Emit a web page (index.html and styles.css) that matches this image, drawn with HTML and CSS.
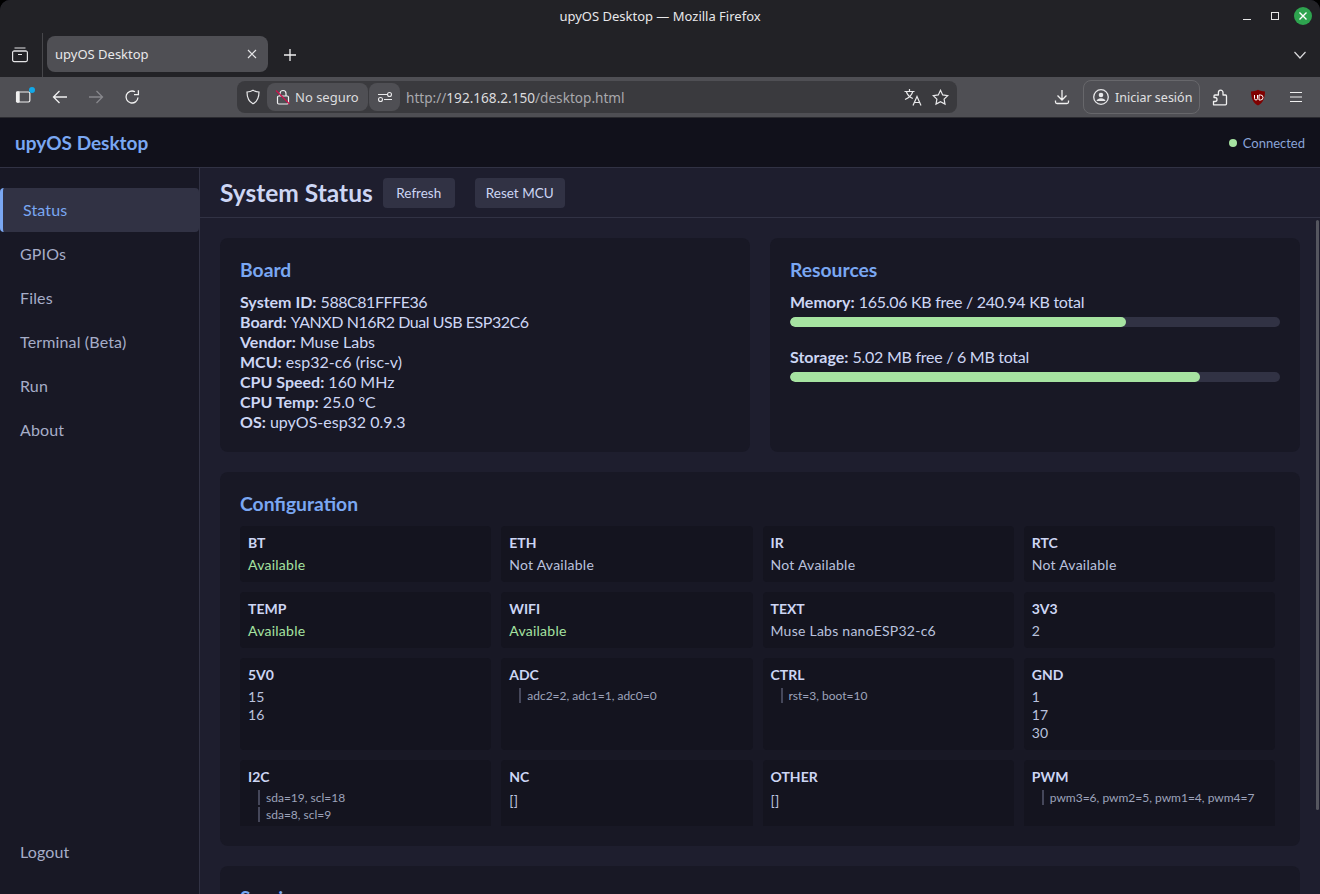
FILE: index.html
```html
<!DOCTYPE html>
<html lang="en">
<head>
    <meta charset="UTF-8">
    <meta name="viewport" content="width=device-width, initial-scale=1.0">
    <title>upyOS Desktop</title>
    <link rel="stylesheet" href="styles.css">
</head>
<body>
<div class="window">
    <div class="titlebar">
        <span class="window-title">upyOS Desktop — Mozilla Firefox</span>
        <div class="window-buttons">
            <svg class="win-min" width="10" height="10" viewBox="0 0 10 10"><path d="M1 8.5h8" stroke="#e6e6e6" fill="none"/></svg>
            <svg class="win-max" width="10" height="10" viewBox="0 0 10 10"><rect x="1.5" y="1.5" width="7" height="7" stroke="#e6e6e6" fill="none"/></svg>
            <svg class="win-close" width="18" height="18" viewBox="0 0 18 18"><circle cx="9" cy="9" r="9" fill="#2ea44f"/><path d="M5.5 5.5l7 7M12.5 5.5l-7 7" stroke="#fff" stroke-width="1.4"/></svg>
        </div>
    </div>
    <div class="tabbar">
        <svg class="view-icon" width="18" height="18" viewBox="0 0 18 18" fill="none" stroke="#e4e4e6" stroke-width="1.2"><path d="M3.500 2h11M2.500 5h13"/><rect x="1.600" y="5" width="14.800" height="10.600" rx="1.500"/><path d="M7 8.500h4"/></svg>
        <div class="tab-sep"></div>
        <div class="tab">
            <span>upyOS Desktop</span>
            <svg width="10" height="10" viewBox="0 0 10 10"><path d="M1 1l8 8M9 1l-8 8" stroke="#e4e4e6" stroke-width="1.2"/></svg>
        </div>
        <svg class="new-tab" width="14" height="14" viewBox="0 0 14 14"><path d="M7 1v12M1 7h12" stroke="#f0f0f0" stroke-width="1.3"/></svg>
        <svg class="tabs-menu" width="14" height="14" viewBox="0 0 14 14" fill="none"><path d="M1.500 4l5.500 6 5.500-6" stroke="#d8d8da" stroke-width="1.2"/></svg>
    </div>
    <div class="toolbar">
        <div class="tool-left">
            <span class="sidebar-btn">
                <svg width="18" height="16" viewBox="0 0 18 16"><rect x="1.700" y="2.700" width="14" height="10.600" rx="1.500" fill="none" stroke="#f0f0f0" stroke-width="1.3"/><rect x="1" y="2" width="4" height="12" rx="1.500" fill="#f0f0f0"/></svg>
                <i class="sidebar-dot"></i>
            </span>
            <svg width="16" height="16" viewBox="0 0 16 16" fill="none" stroke="#f0f0f0" stroke-width="1.3"><path d="M15 8H1.500M7.500 2L1.500 8l6 6"/></svg>
            <svg width="16" height="16" viewBox="0 0 16 16" fill="none" stroke="#88888c" stroke-width="1.3"><path d="M1 8h13.500M8.500 2l6 6-6 6"/></svg>
            <svg width="16" height="16" viewBox="0 0 16 16" fill="none" stroke="#f0f0f0" stroke-width="1.3"><path d="M14 8.500A6 6 0 1 1 11 2.800"/><path d="M14.400 1.200v4.400H10"/></svg>
        </div>
        <div class="urlbar">
            <svg class="shield" width="16" height="16" viewBox="0 0 16 16" fill="none" stroke="#e8e8ea" stroke-width="1.2"><path d="M8 1.200c2 1.300 4 1.700 6 1.800 0 5.500-1.500 9.500-6 11.800C3.500 12.500 2 8.500 2 3c2-.1 4-.5 6-1.800z"/></svg>
            <div class="chip chip-lock">
                <svg width="16" height="16" viewBox="0 0 16 16" fill="none"><rect x="2.500" y="7" width="11" height="8" rx="1.200" stroke="#f0f0f2" stroke-width="1.200"/><path d="M5 7V4.500a3 3 0 0 1 6 0V7" stroke="#f0f0f2" stroke-width="1.200"/><path d="M1 1.500l13.500 13.500" stroke="#d0104c" stroke-width="1.200"/></svg>
                <span>No seguro</span>
            </div>
            <div class="chip chip-perm">
                <svg width="16" height="16" viewBox="0 0 16 16" fill="none" stroke="#e8e8ea" stroke-width="1.100"><path d="M1 5.500h9M7 10.500h8"/><circle cx="12.500" cy="5.500" r="2"/><circle cx="3.500" cy="10.500" r="2"/></svg>
            </div>
            <span class="url"><span class="url-dim">http://</span>192.168.2.150<span class="url-dim">/desktop.html</span></span>
            <svg class="translate" width="18" height="18" viewBox="0 0 18 18" fill="none" stroke="#e8e8ea" stroke-width="1.200"><path d="M.5 3.500h10M5.500 1v2.500M8.800 3.500C7.800 7 5 9.800 1 11.500M2.300 3.500c1 3.500 3.500 5.700 6.500 7"/><path d="M9 17.500l4-9 4 9M10.400 14.500h5.200"/></svg>
            <svg class="star" width="17" height="17" viewBox="0 0 17 17" fill="none" stroke="#e8e8ea" stroke-width="1.200"><path d="M8.500 1.300l2.200 4.600 5 .7-3.600 3.500.9 5-4.500-2.400L4 15.100l.9-5L1.300 6.600l5-.7z"/></svg>
        </div>
        <div class="tool-right">
            <svg width="16" height="16" viewBox="0 0 16 16" fill="none" stroke="#f0f0f0" stroke-width="1.300"><path d="M8 1v9.500M3.500 6.500L8 11l4.500-4.500M1.500 11.500v1.500a1.500 1.500 0 0 0 1.500 1.500h10a1.500 1.500 0 0 0 1.500-1.500v-1.500"/></svg>
            <div class="signin">
                <svg width="18" height="18" viewBox="0 0 18 18" fill="none"><circle cx="9" cy="9" r="7.300" stroke="#e8e8ea" stroke-width="1.300"/><circle cx="9" cy="7" r="2.300" fill="#e8e8ea"/><path d="M4.500 13c.6-2 2.200-2.800 4.500-2.800s3.900.8 4.500 2.800z" fill="#e8e8ea"/></svg>
                <span>Iniciar sesión</span>
            </div>
            <svg class="puzzle" width="16" height="17" viewBox="0 0 16 17" fill="none" stroke="#f0f0f0" stroke-width="1.300" stroke-linejoin="round"><path d="M1.500 15.800h12a1 1 0 0 0 1-1V7a1 1 0 0 0-1-1h-2.500V3.500a2.300 2.300 0 0 0-4.600 0V6H3a1 1 0 0 0-1 1v1.500h1a2 2 0 0 1 0 4H1.500z"/></svg>
            <svg class="ublock" width="16" height="17" viewBox="0 0 16 17"><path d="M8 .8c2 1.200 4.500 1.600 7 1.700 0 6.500-2 11.500-7 14-5-2.500-7-7.500-7-14 2.500-.1 5-.5 7-1.700z" fill="#800000"/><path d="M4.500 6v3.500a1.500 1.500 0 0 0 3 0V6M9 6v5h1.500a2.500 2.500 0 0 0 0-5z" fill="none" stroke="#fff" stroke-width="1"/></svg>
            <svg class="hamburger" width="14" height="12" viewBox="0 0 14 12"><path d="M1 1.500h12M1 6h12M1 10.500h12" stroke="#f0f0f0" stroke-width="1.200"/></svg>
        </div>
    </div>

    <header class="app-header">
        <span class="brand">upyOS Desktop</span>
        <span class="status"><i class="status-dot"></i>Connected</span>
    </header>

    <div class="app-body">
        <nav class="sidebar">
            <a class="nav-item active">Status</a>
            <a class="nav-item">GPIOs</a>
            <a class="nav-item">Files</a>
            <a class="nav-item">Terminal (Beta)</a>
            <a class="nav-item">Run</a>
            <a class="nav-item">About</a>
            <a class="nav-item logout">Logout</a>
        </nav>
        <main class="main">
            <div class="main-head">
                <h1>System Status</h1>
                <button class="btn">Refresh</button>
                <button class="btn btn-reset">Reset MCU</button>
            </div>
            <div class="content">
                <div class="scroll-thumb"></div>
                <div class="top-cards">
                    <section class="card">
                        <h2>Board</h2>
                        <p class="line"><b>System ID:</b> <span class="tight">588C81FFFE36</span></p>
                        <p class="line"><b>Board:</b> <span class="tight">YANXD N16R2 Dual USB ESP32C6</span></p>
                        <p class="line"><b>Vendor:</b> Muse Labs</p>
                        <p class="line"><b>MCU:</b> esp32-c6 (risc-v)</p>
                        <p class="line"><b>CPU Speed:</b> 160 MHz</p>
                        <p class="line"><b>CPU Temp:</b> 25.0 °C</p>
                        <p class="line"><b>OS:</b> upyOS-esp32 0.9.3</p>
                    </section>
                    <section class="card">
                        <h2>Resources</h2>
                        <p class="line"><b>Memory:</b> <span class="tight-res">165.06 KB free / 240.94 KB total</span></p>
                        <div class="bar"><div class="bar-fill" style="width: 68.5%"></div></div>
                        <p class="line"><b>Storage:</b> <span class="tight-res">5.02 MB free / 6 MB total</span></p>
                        <div class="bar"><div class="bar-fill" style="width: 83.7%"></div></div>
                    </section>
                </div>
                <section class="card">
                    <h2>Configuration</h2>
                    <div class="config-grid">
                        <div class="item"><div class="label">BT</div><div class="val ok">Available</div></div>
                        <div class="item"><div class="label">ETH</div><div class="val">Not Available</div></div>
                        <div class="item"><div class="label">IR</div><div class="val">Not Available</div></div>
                        <div class="item"><div class="label">RTC</div><div class="val">Not Available</div></div>
                        <div class="item"><div class="label">TEMP</div><div class="val ok">Available</div></div>
                        <div class="item"><div class="label">WIFI</div><div class="val ok">Available</div></div>
                        <div class="item"><div class="label">TEXT</div><div class="val">Muse Labs nanoESP32-c6</div></div>
                        <div class="item"><div class="label">3V3</div><div class="val">2</div></div>
                        <div class="item"><div class="label">5V0</div><div class="val">15</div><div class="val">16</div></div>
                        <div class="item"><div class="label">ADC</div><div class="sub">adc2=2, adc1=1, adc0=0</div></div>
                        <div class="item"><div class="label">CTRL</div><div class="sub">rst=3, boot=10</div></div>
                        <div class="item"><div class="label">GND</div><div class="val">1</div><div class="val">17</div><div class="val">30</div></div>
                        <div class="item"><div class="label">I2C</div><div class="sub">sda=19, scl=18</div><div class="sub">sda=8, scl=9</div></div>
                        <div class="item"><div class="label">NC</div><div class="val empty">[]</div></div>
                        <div class="item"><div class="label">OTHER</div><div class="val empty">[]</div></div>
                        <div class="item"><div class="label">PWM</div><div class="sub">pwm3=6, pwm2=5, pwm1=4, pwm4=7</div></div>
                    </div>
                </section>
                <section class="card">
                    <h2>Services</h2>
                </section>
            </div>
        </main>
    </div>
</div>
</body>
</html>
```

FILE: styles.css
```css
* {
    box-sizing: border-box;
}
html, body {
    margin: 0;
    height: 894px;
    overflow: hidden;
    background-color: #000;
}
.window {
    display: flex;
    flex-direction: column;
    height: 894px;
    overflow: hidden;
    border-radius: 10px 10px 0 0;
    background-color: #1e1e2e;
    font-family: "Lato", sans-serif;
    color: #cdd6f4;
}

/* browser chrome */
.titlebar {
    position: relative;
    display: flex;
    align-items: center;
    justify-content: center;
    flex: 0 0 33px;
    padding-bottom: 2px;
    background-color: #222226;
    font-family: "Noto Sans", sans-serif;
    font-size: 13px;
    color: #e8e8ea;
}
.window-buttons {
    position: absolute;
    right: 8px;
    top: 7px;
    display: flex;
    align-items: center;
}
.win-min {
    margin-right: 18px;
}
.win-max {
    margin-right: 14px;
}
.tabbar {
    display: flex;
    align-items: center;
    flex: 0 0 44px;
    background-color: #222226;
    font-family: "Noto Sans", sans-serif;
}
.view-icon {
    margin-left: 11px;
}
.tab-sep {
    width: 1px;
    height: 44px;
    margin-left: 13px;
    margin-right: 4px;
    background-color: #47474b;
}
.tab {
    display: flex;
    align-items: center;
    justify-content: space-between;
    width: 221px;
    height: 36px;
    margin-bottom: 3px;
    padding: 0 11px 0 8px;
    border-radius: 8px;
    background-color: #4f4f54;
    font-size: 13px;
    color: #e8e8ea;
}
.new-tab {
    margin-left: 15px;
}
.tabs-menu {
    margin-left: auto;
    margin-right: 13px;
}
.toolbar {
    position: relative;
    display: flex;
    align-items: center;
    flex: 0 0 41px;
    background-color: #4f4f54;
    border-bottom: 1px solid #2b2b30;
    font-family: "Noto Sans", sans-serif;
}
.tool-left {
    display: flex;
    align-items: center;
    width: 237px;
    padding-left: 15px;
    gap: 20px;
}
.sidebar-btn {
    position: relative;
    display: flex;
    width: 17px;
}
.sidebar-dot {
    position: absolute;
    top: -2px;
    right: -3px;
    width: 6px;
    height: 6px;
    border-radius: 50%;
    background-color: #12a8e8;
}
.urlbar {
    display: flex;
    align-items: center;
    width: 720px;
    height: 32px;
    padding: 0 8px;
    border-radius: 8px;
    background-color: #3a3a3e;
    font-size: 13.6px;
    color: #dcdcde;
}
.chip {
    display: flex;
    align-items: center;
    height: 28px;
    border-radius: 8px;
    background-color: #4f4f54;
}
.chip-lock {
    width: 101px;
    margin-left: 6px;
    padding-left: 8px;
    gap: 4px;
    font-size: 13px;
}
.chip-perm {
    justify-content: center;
    width: 31px;
    margin-left: 1px;
}
.url {
    margin-left: 6px;
    flex: 1;
}
.url-dim {
    color: #a9a9ad;
}
.translate {
    margin-right: 10px;
}
.tool-right {
    display: flex;
    align-items: center;
    flex: 1;
    padding-left: 97px;
}
.signin {
    display: flex;
    align-items: center;
    gap: 5px;
    width: 117px;
    height: 34px;
    margin-left: 13px;
    padding-left: 8px;
    border: 1px solid #67676b;
    border-radius: 8px;
    font-size: 12.5px;
    color: #e0e0e2;
}
.puzzle {
    margin-left: 12px;
}
.ublock {
    margin-left: 22px;
}
.hamburger {
    margin-left: 23px;
}

/* app */
.app-header {
    display: flex;
    align-items: center;
    justify-content: space-between;
    flex: 0 0 50px;
    padding: 0 15px;
    background-color: #11111b;
    border-bottom: 1px solid #313244;
}
.brand {
    font-size: 19px;
    font-weight: 700;
    color: #7aa7f2;
}
.status {
    display: flex;
    align-items: center;
    font-size: 13px;
    color: #8aa4d8;
}
.status-dot {
    width: 8px;
    height: 8px;
    margin-right: 6px;
    border-radius: 50%;
    background-color: #a6e3a1;
}
.app-body {
    display: flex;
    flex: 1;
    min-height: 0;
}
.sidebar {
    display: flex;
    flex-direction: column;
    flex: 0 0 200px;
    padding: 20px 0;
    background-color: #181825;
    border-right: 1px solid #313244;
}
.nav-item {
    display: flex;
    align-items: center;
    height: 44px;
    padding: 0 0 2px 20px;
    border-radius: 4px;
    font-size: 16px;
    letter-spacing: .15px;
    color: #a6adc8;
}
.nav-item.active {
    border-left: 3px solid #7aa7f2;
    background-color: #313244;
    color: #7aa7f2;
}
.logout {
    margin-top: auto;
}
.main {
    display: flex;
    flex-direction: column;
    flex: 1;
    min-width: 0;
}
.main-head {
    display: flex;
    align-items: center;
    flex: 0 0 50px;
    padding: 0 20px;
    border-bottom: 1px solid #313244;
}
h1 {
    margin: 0 10px 0 0;
    font-size: 24.5px;
    font-weight: 700;
}
.btn {
    height: 30px;
    margin-right: 20px;
    padding: 0 13.5px;
    border: none;
    border-radius: 4px;
    background-color: #313244;
    color: #cdd6f4;
    font-family: "Lato", sans-serif;
    font-size: 13.5px;
}
.btn-reset {
    padding: 0 11px;
}
.content {
    position: relative;
    display: flex;
    flex-direction: column;
    flex: 1;
    gap: 20px;
    min-height: 0;
    overflow: hidden;
    padding: 20px;
}
.scroll-thumb {
    position: absolute;
    top: 2px;
    right: 1px;
    width: 3px;
    height: 590px;
    border-radius: 2px;
    background-color: #55565f;
}
.top-cards {
    display: grid;
    grid-template-columns: 1fr 1fr;
    gap: 20px;
}
.card {
    flex-shrink: 0;
    padding: 20px;
    border-radius: 8px;
    background-color: #181825;
}
h2 {
    margin: 0 0 8px;
    height: 26px;
    font-size: 19.3px;
    font-weight: 700;
    line-height: 24px;
    color: #7aa7f2;
}
.line {
    margin: 0;
    font-size: 16px;
    line-height: 20px;
}
.tight {
    letter-spacing: -.45px;
}
.tight-res {
    letter-spacing: -.27px;
}
.bar {
    height: 10px;
    margin: 5px 0 20px;
    border-radius: 5px;
    overflow: hidden;
    background-color: #313244;
}
.bar:last-child {
    margin-bottom: 0;
}
.bar-fill {
    height: 100%;
    border-radius: 5px;
    background-color: #a6e3a1;
}
.config-grid {
    display: grid;
    grid-template-columns: repeat(4, 251.25px);
    gap: 10px;
    height: 299.7px;
    margin-top: 8.3px;
    overflow: hidden;
}
.item {
    padding: 8px;
    border-radius: 4px;
    background-color: #14141f;
    font-size: 14px;
}
.label {
    margin-bottom: 3.4px;
    font-weight: 700;
    line-height: 18.5px;
}
.val {
    line-height: 18px;
    letter-spacing: .25px;
    color: #bac2de;
}
.val.ok {
    color: #a6e3a1;
}
.val.empty {
    padding-top: 2px;
}
.sub {
    height: 15px;
    margin: 0 0 2px 10px;
    padding-left: 6px;
    border-left: 2px solid #45475a;
    font-size: 12px;
    line-height: 15px;
    color: #9da3bb;
}
```
